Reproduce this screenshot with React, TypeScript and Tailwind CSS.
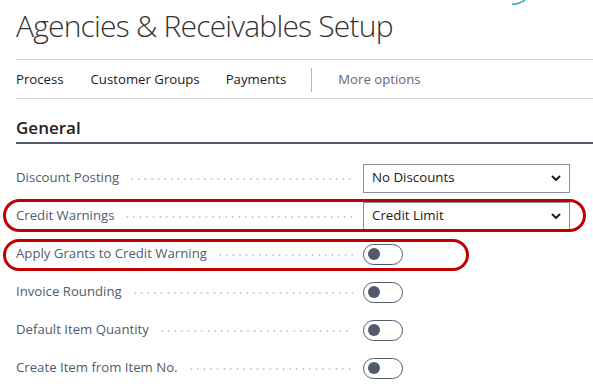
import React from "react";

const font = { fontFamily: '"Segoe UI", "Open Sans", "Noto Sans", sans-serif' };

function Chevron() {
  return (
    <svg width="10" height="7" viewBox="0 0 10 7" className="shrink-0">
      <path d="M1.5 1.5 L5 5 L8.5 1.5" fill="none" stroke="#212121" strokeWidth="2" strokeLinecap="round" strokeLinejoin="round" />
    </svg>
  );
}

function Select({ value }: { value: string }) {
  return (
    <div className="w-[207px] h-[29px] border border-[#8a8f98] flex items-center justify-between pl-[8px] pr-[8px] text-[13.3px] text-[#212121] bg-white">
      <span>{value}</span>
      <Chevron />
    </div>
  );
}

function Toggle() {
  return (
    <div className="w-[40px] h-[21px] rounded-full border border-[#505c6d] flex items-center pl-[4px] bg-white">
      <div className="w-[12px] h-[12px] rounded-full bg-[#505c6d]" />
    </div>
  );
}

function Row({ label, children }: { label: string; children: React.ReactNode }) {
  return (
    <div className="h-[38px] flex items-center">
      <div className="w-[337px] flex items-center shrink-0">
        <span className="text-[13.2px] text-[#505c6d] whitespace-nowrap">{label}</span>
        <div className="flex-1 ml-[10px] mt-[3px] h-[2px] bg-[radial-gradient(circle,#bdbdbd_0.9px,transparent_1.1px)] bg-[length:6.6px_2px] bg-repeat-x" />
      </div>
      <div className="ml-[10px]">{children}</div>
    </div>
  );
}

export default function App() {
  return (
    <div className="relative w-[593px] h-[389px] bg-white overflow-hidden" style={font}>
      <svg className="absolute left-[510px] top-0" width="20" height="6" viewBox="0 0 20 6">
        <path d="M2 4.5 Q10 4 15 0" fill="none" stroke="#2aa7a3" strokeWidth="1.6" />
      </svg>
      <div className="pl-[16px]">
        <h1 className="h-[59px] pt-[6px] text-[30px] leading-[40px] font-light text-[#333333] tracking-[-0.8px]">
          Agencies &amp; Receivables Setup
        </h1>
        <div className="h-[40px] pt-[2px] border-y border-[#d8d8d8] flex items-center text-[13.2px] text-[#212121]">
          <span>Process</span>
          <span className="ml-[27px]">Customer Groups</span>
          <span className="ml-[26px]">Payments</span>
          <div className="ml-[25px] w-px h-[24px] bg-[#b8b8b8]" />
          <span className="ml-[26px] text-[#5f6b7c]">More options</span>
        </div>
        <div className="mt-[18px] h-[27px] border-b-2 border-[#505c6d] text-[17px] font-semibold text-[#212121] leading-[22px]">
          General
        </div>
        <div className="mt-[15px]">
          <Row label="Discount Posting"><Select value="No Discounts" /></Row>
          <Row label="Credit Warnings"><Select value="Credit Limit" /></Row>
          <Row label="Apply Grants to Credit Warning"><Toggle /></Row>
          <Row label="Invoice Rounding"><Toggle /></Row>
          <Row label="Default Item Quantity"><Toggle /></Row>
          <Row label="Create Item from Item No."><Toggle /></Row>
        </div>
      </div>
      <div className="absolute left-[3px] top-[199px] w-[583px] h-[33px] rounded-[17px] border-[3px] border-[#c00000]" />
      <div className="absolute left-[3px] top-[239px] w-[466px] h-[32px] rounded-[16px] border-[3px] border-[#c00000]" />
    </div>
  );
}
